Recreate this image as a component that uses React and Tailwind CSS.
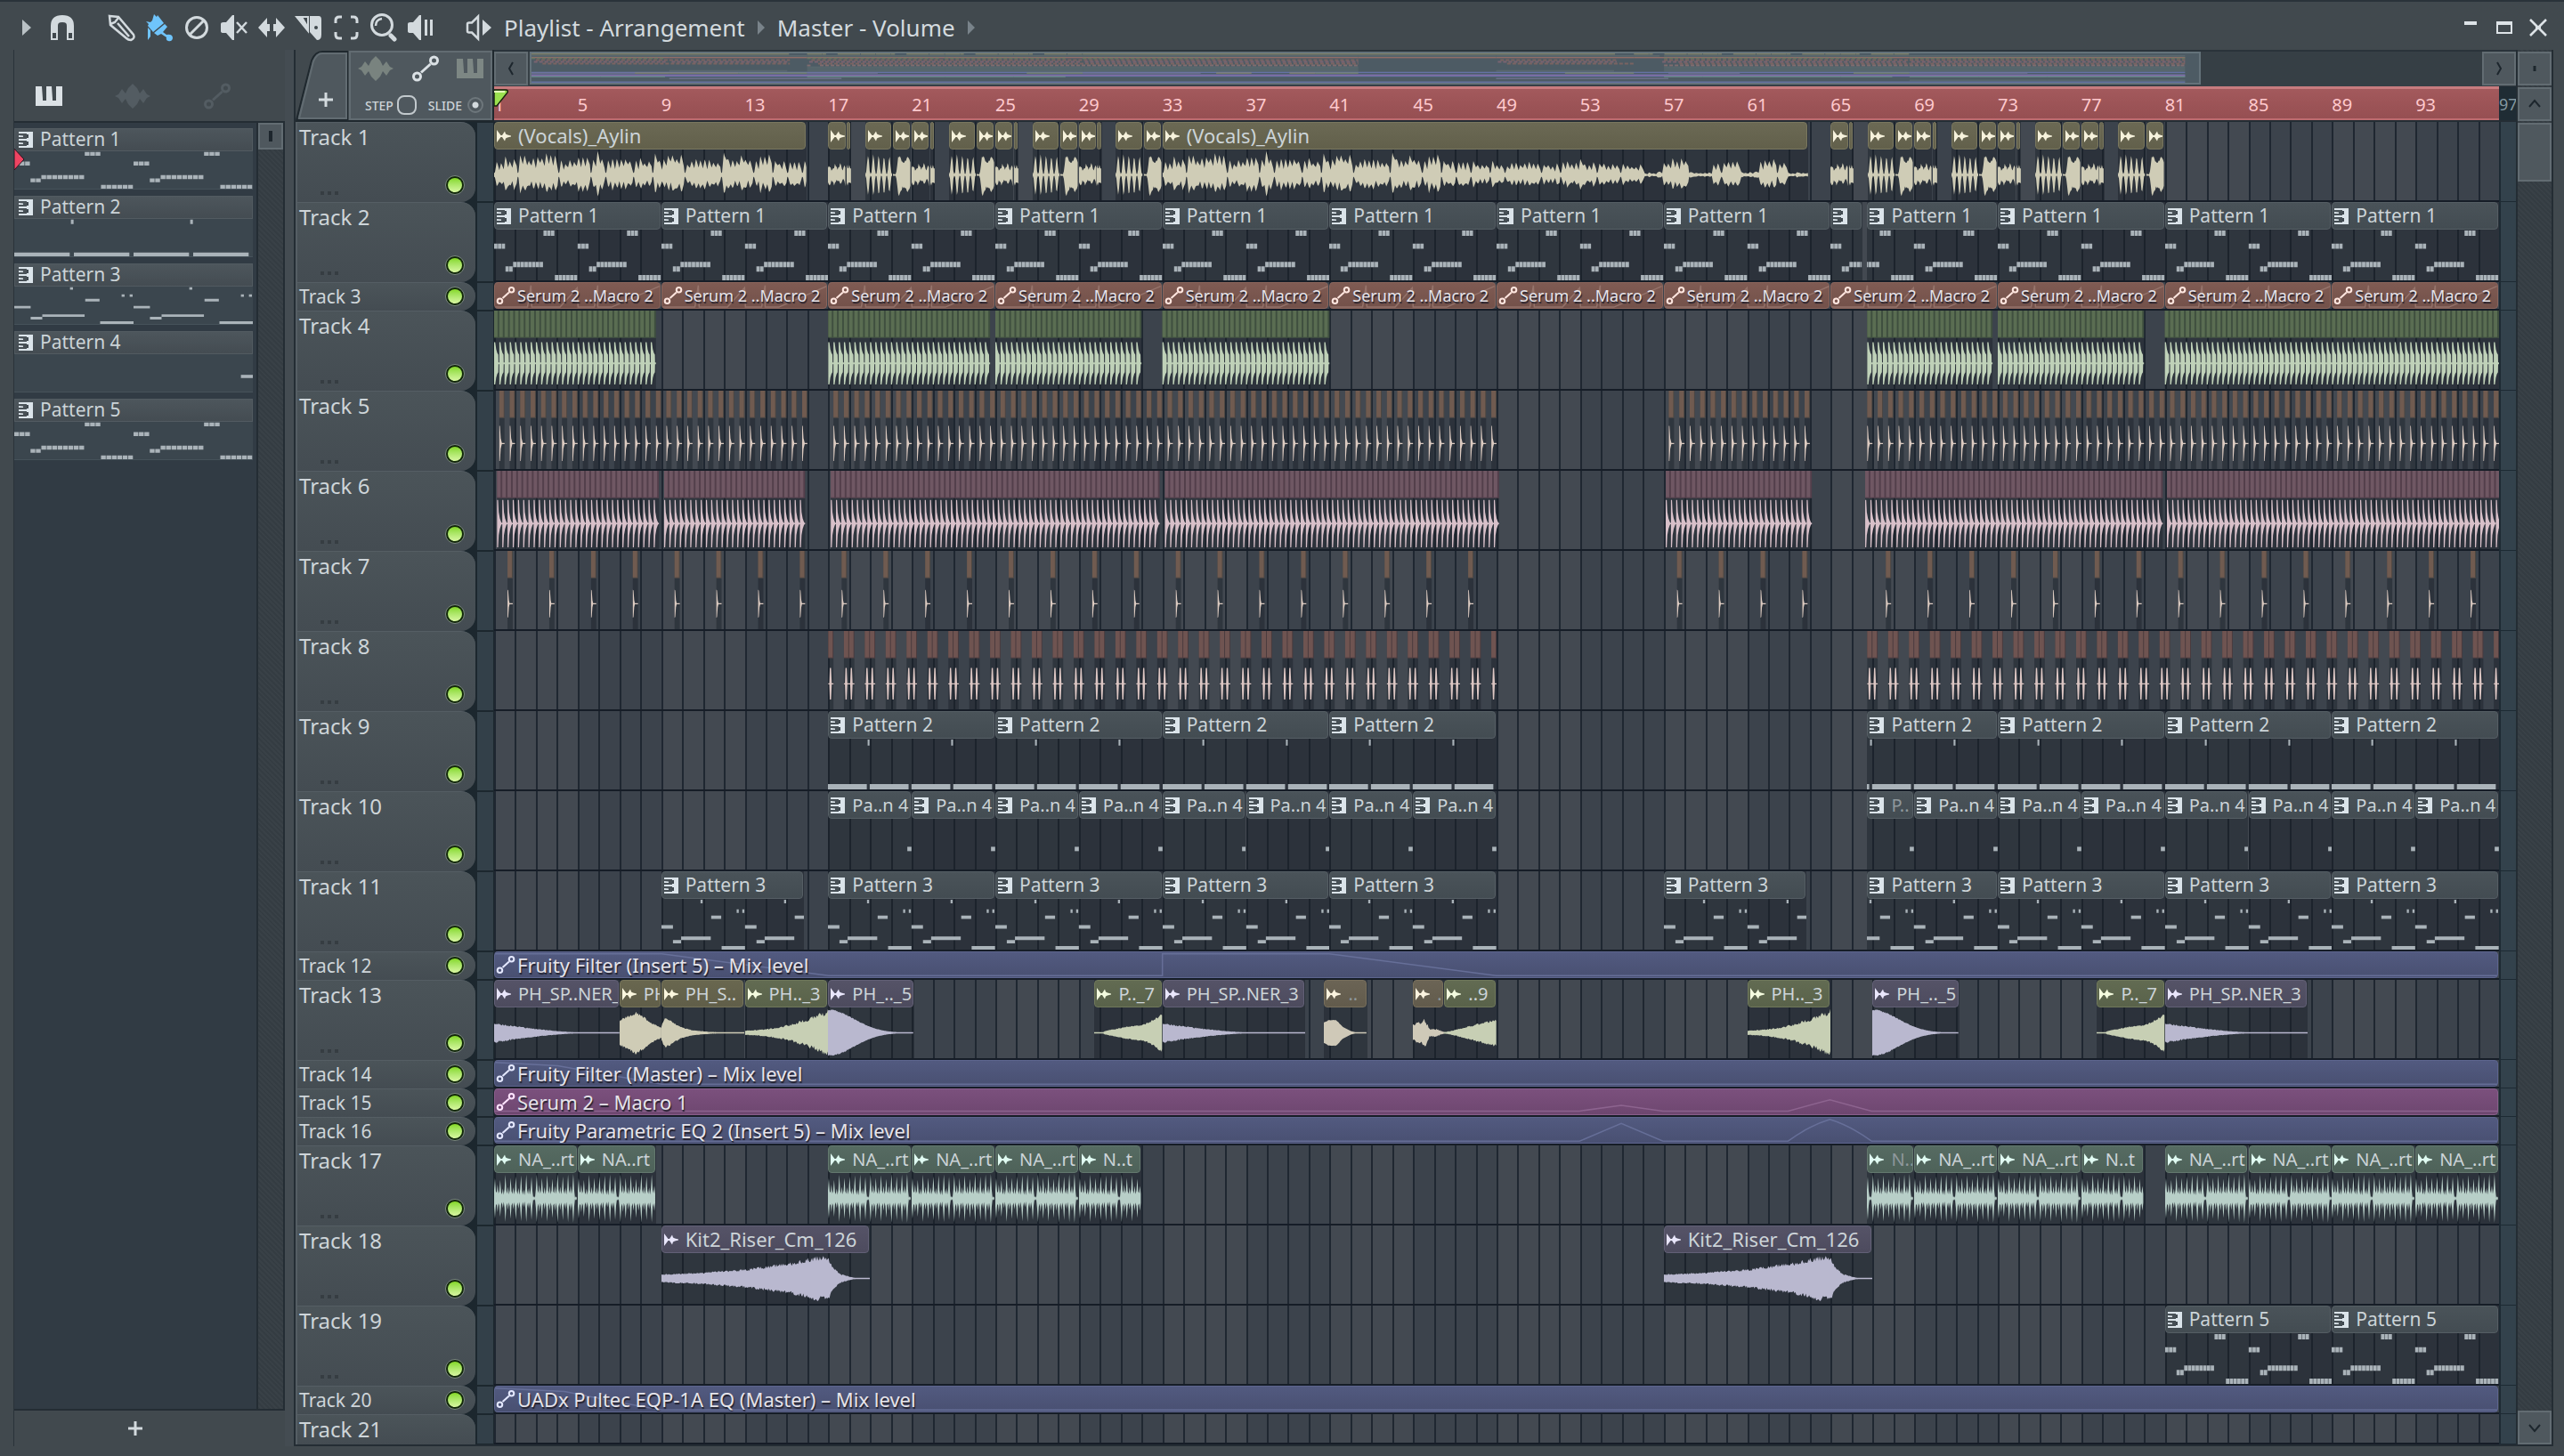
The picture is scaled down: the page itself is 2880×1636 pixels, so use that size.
import { useState } from 'react';
import clsx from 'clsx';

const BARS = 96;
const UNIT = 24; // svg units per bar
const BODY = 58; // svg units for the clip body height

const random = (seed) => {
  let s = seed * 7919 + 13;
  return () => {
    s = (s * 16807) % 2147483647;
    return s / 2147483647;
  };
};

const percent = (bars) => `${(bars / BARS) * 100}%`;

/* Waveforms */

// envelope from a list of [bar, amplitude] points
const envelope = (points) => (t) => {
  const next = points.findIndex(([bar]) => bar >= t);
  if (next === -1) return points[points.length - 1][1];
  if (next === 0) return points[0][1];
  const [x0, y0] = points[next - 1];
  const [x1, y1] = points[next];
  return y0 + ((y1 - y0) * (t - x0)) / (x1 - x0);
};

const wavePath = (length, env, rough, seed) => {
  const rnd = random(seed);
  const width = length * UNIT;
  const top = [];
  const bottom = [];
  for (let x = 0; x <= width; x += 1) {
    const amp = env(x / UNIT);
    top.push(`${x} ${(29 - Math.max(0.7, amp * (1 - rough * rnd()))).toFixed(1)}`);
    bottom.unshift(`${x} ${(29 + Math.max(0.7, amp * (1 - rough * rnd()))).toFixed(1)}`);
  }
  return `M${top.join('L')}L${bottom.join('L')}Z`;
};

const vocalPath = (length, seed) => {
  const rnd = random(seed);
  const width = length * UNIT;
  const top = [];
  const bottom = [];
  let x = 0;
  let phrase = 0;
  let level = 0.8;
  while (x < width) {
    if (phrase <= 0) {
      phrase = 3 + Math.floor(rnd() * 7);
      level = 0.66 + rnd() * 0.34;
      top.push([x, 2], [x + 1, 3]);
      bottom.push([x, 2], [x + 1, 3]);
      x += 2;
    }
    phrase -= 1;
    const bar = x / UNIT;
    let scale = level;
    if (bar > 23) scale *= (bar * 0.42) % 1 > 0.55 ? 0.15 : 0.8;
    else if (bar > 15) scale *= 0.72;
    const peak = 27 * scale * (0.62 + 0.4 * rnd());
    top.push([x + 1, peak], [x + 2, peak * 0.85], [x + 4, peak * (0.35 + 0.35 * rnd())]);
    bottom.push([x + 1, peak * (0.65 + 0.35 * rnd())], [x + 2, peak * 0.8], [x + 4, peak * (0.35 + 0.35 * rnd())]);
    x += 5;
  }
  const up = top.map(([px, a]) => `${Math.min(px, width)} ${(29 - a).toFixed(1)}`);
  const down = bottom.reverse().map(([px, a]) => `${Math.min(px, width)} ${(29 + a).toFixed(1)}`);
  return `M${up.join('L')}L${down.join('L')}Z`;
};

const loopPath = (length, offset) => {
  const rnd = random(5);
  const top = [];
  const bottom = [];
  const start = offset * UNIT;
  for (let x = 0; x < 4 * UNIT; x += 3) {
    const big = x % 6 === 0;
    const a = (big ? 21 + 7 * rnd() : 10 + 6 * rnd()) * (x % 48 === 45 ? 0.2 : 1);
    if (x >= start && x - start <= length * UNIT - 2) {
      const px = x - start;
      top.push(`${px} ${29 - a * 0.4}L${px + 1} ${29 - a}L${px + 2} ${29 - a * 0.35}`);
      bottom.unshift(`${px + 2} ${29 + a * 0.35}L${px + 1} ${29 + a}L${px} ${29 + a * 0.4}`);
    }
  }
  return `M${top.join('L')}L${bottom.join('L')}Z`;
};

const SHAPES = {
  burst: (n) => wavePath(n, (t) => 1 + 24 * Math.pow(Math.abs(Math.sin(t * Math.PI * 3.9)), 3) * (1 - t * 0.1), 0.15, 4),
  fat: (n) => wavePath(n, envelope([[0, 1], [0.15, 1], [0.25, 22], [0.32, 26], [0.45, 16], [0.6, 17], [0.7, 25], [0.85, 13]]), 0.2, 6),
  tail: (n) => wavePath(n, (t) => (t > 0.86 ? 12 : 11 + 3 * Math.sin(t * 24)), 0.45, 9),
  sliver: (n) => wavePath(n, () => 13, 0.5, 3),
  decay: (n) => wavePath(n, (t) => 12 * Math.pow(Math.max(0, 1 - t / 4.8), 1.7), 0.2, 11),
  swell: (n) => wavePath(n, envelope([[0, 15], [0.4, 20], [0.8, 25], [1.1, 20], [1.5, 12], [2, 6]]), 0.15, 12),
  pluck: (n) => wavePath(n, envelope([[0, 8], [0.15, 18], [0.4, 15], [0.9, 7], [1.5, 3], [2.4, 1], [4, 0]]), 0.15, 13),
  rise: (n) => wavePath(n, (t) => 3 + 25 * Math.pow(t / 4, 2), 0.25, 14),
  fall: (n) => wavePath(n, (t) => 27 * Math.exp(-Math.pow(t / 1.75, 2)), 0.06, 15),
  grow: (n) => wavePath(n, envelope([[0, 0], [0.4, 0], [0.5, 2], [1.5, 7], [2.4, 10], [2.8, 15], [3.2, 22]]), 0.15, 16),
  bulb: (n) => wavePath(n, envelope([[0, 12], [0.25, 15], [0.6, 15], [0.9, 7], [1.3, 2], [1.6, 0]]), 0.05, 17),
  rough: (n) => wavePath(n, envelope([[0, 10], [0.6, 17], [0.8, 5], [1.1, 5], [1.5, 1]]), 0.35, 18),
  cone: (n) => wavePath(n, envelope([[0, 1], [0.3, 2], [2.4, 16]]), 0.2, 19),
  riser: (n) => wavePath(n, envelope([[0, 5], [2, 7], [4, 11], [6, 18], [7.4, 26], [8, 27], [8.2, 14], [8.6, 5], [9.2, 1], [10, 0]]), 0.25, 20),
  vocal: (n) => vocalPath(n, 21),
  loop: (n) => loopPath(n, 0),
  loopEnd: (n) => loopPath(n, 1.75),
};

/* Note patterns, four bars long: [start, end, y, height] */

const chords = () => {
  const step = 4 / 22;
  const rows = [19, 19, 19, 45, 45, 40, 40, 40, 40, 40, 40, 40, 40, 4, 4, 4, 55, 55, 55, 55, 55, 55];
  return rows.map((y, i) => [i * step, i * step + step * 0.88, y - 3, 6]);
};

const NOTES = {
  1: chords(),
  2: [[1.9, 1.99, 1, 7], [0, 1.86, 52, 6], [2, 3.86, 52, 6]],
  3: [
    [0, 0.55, 30, 4], [0.55, 0.94, 47, 4], [0.94, 2.36, 43, 4], [2.38, 2.86, 19, 4], [2.88, 4, 54, 4],
    [1.87, 1.97, 1, 4], [3.6, 3.7, 12, 4], [3.87, 3.97, 12, 4],
  ],
  4: [[3.8, 4, 32, 5]],
  5: chords(),
};

const Notes = ({ pattern, start = 0, length, className }) => {
  const first = Math.floor(start / 4) * 4;
  const d = [];
  for (let base = first; base < start + length; base += 4) {
    NOTES[pattern].forEach(([a, b, y, h]) => {
      const x0 = Math.max(base + a - start, 0) * UNIT;
      const x1 = Math.min(base + b - start, length) * UNIT;
      if (x1 > x0) d.push(`M${x0.toFixed(2)} ${y}H${x1.toFixed(2)}v${h}H${x0.toFixed(2)}Z`);
    });
  }
  return (
    <svg className={className} viewBox={`0 0 ${length * UNIT} ${BODY}`} preserveAspectRatio="none" aria-hidden="true">
      <path d={d.join('')} fill="#aab3b9" />
    </svg>
  );
};

/* Track data, positions in bars from the start of the song */

const pattern = (n, start, end, label = `Pattern ${n}`) => ({ kind: 'pattern', n, start, end, label });
const audio = (tone, shape, start, end, label = '') => ({ kind: 'audio', tone, shape, start, end, label });
const auto = (tone, start, end, label, line) => ({ kind: 'auto', tone, start, end, label, line });

const chop = (start) => [
  audio('olive', 'burst', start, start + 1.3),
  audio('olive', 'fat', start + 1.34, start + 2.2),
];
const chopEnd = (start) => [
  audio('olive', 'tail', start, start + 0.86),
  audio('olive', 'sliver', start + 0.88, start + 1.1),
];

const every = (from, to, step, make) => {
  const out = [];
  for (let bar = from; bar < to; bar += step) out.push(make(bar));
  return out;
};

const FULL = 96;
const serumLine = 'M0 30H38L42 3L43 30H76L96 6L97 30H116L120 3V30H136L192 4';
const loopClips = (starts, last) => starts.map((s) => audio('teal', 'loop', s, s + 4, 'NA_..rt')).concat(last);

const TRACKS = [
  {
    clips: [
      audio('olive', 'vocal', 0, 14.95, '(Vocals)_Aylin'),
      ...chopEnd(16),
      ...chop(17.77), ...chopEnd(20),
      ...chop(21.77), ...chopEnd(24),
      ...chop(25.77), ...chopEnd(28),
      ...chop(29.77),
      audio('olive', 'vocal', 32, 62.9, '(Vocals)_Aylin'),
      ...chopEnd(64),
      ...chop(65.77), ...chopEnd(68),
      ...chop(69.77), ...chopEnd(72),
      ...chop(73.77), ...chopEnd(76),
      ...chop(77.77),
    ],
  },
  {
    clips: [
      ...every(0, 64, 8, (b) => pattern(1, b, b + 8)),
      pattern(1, 64, 65.5, ''),
      pattern(1, 65.75, 72),
      ...every(72, 96, 8, (b) => pattern(1, b, b + 8)),
    ],
  },
  { short: true, clips: every(0, 96, 8, (b) => auto('brown', b, b + 8, 'Serum 2 ..Macro 2', serumLine)) },
  { hits: { tone: 'leaf', step: 0.25, shape: 'kick', dense: true, ranges: [[0, 7.7], [16, 23.7], [24, 31], [32, 40], [65.75, 71.7], [72, 79], [80, 96]] } },
  { hits: { tone: 'tan', step: 0.5, shape: 'clap', ranges: [[0.25, 15], [16.25, 48], [56.25, 63], [65.75, 96]] } },
  { hits: { tone: 'rose', step: 0.25, shape: 'hat', dense: true, ranges: [[0.14, 7.8], [8.14, 14.85], [16.12, 31.85], [32.12, 48], [56.1, 63], [65.65, 79.85], [80.1, 96]] } },
  { hits: { tone: 'tan', step: 2, shape: 'snap', ranges: [[0.64, 15], [16.64, 48], [56.64, 64], [66.64, 96]] } },
  { hits: { tone: 'rust', step: 1, shape: 'shake', pair: true, ranges: [[16, 16.2], [16.75, 47.7], [47.75, 48], [65.75, 95.7], [95.75, 96]] } },
  { clips: [...every(16, 48, 8, (b) => pattern(2, b, b + 8)), pattern(2, 65.75, 72), ...every(72, 96, 8, (b) => pattern(2, b, b + 8))] },
  {
    clips: [
      ...every(16, 48, 4, (b) => pattern(4, b, b + 4, 'Pa..n 4')),
      { ...pattern(4, 65.75, 68, 'P..'), faded: true },
      ...every(68, 96, 4, (b) => pattern(4, b, b + 4, 'Pa..n 4')),
    ],
  },
  {
    clips: [
      pattern(3, 8, 14.85),
      ...every(16, 48, 8, (b) => pattern(3, b, b + 8)),
      pattern(3, 56, 62.85),
      pattern(3, 65.75, 72),
      ...every(72, 96, 8, (b) => pattern(3, b, b + 8)),
    ],
  },
  { short: true, clips: [auto('blue', 0, FULL, 'Fruity Filter (Insert 5) – Mix level', 'M0 2H192L384 29H768V2H960L1152 29H2304')] },
  {
    clips: [
      audio('purple', 'decay', 0, 6, 'PH_SP..NER_'),
      audio('khaki', 'swell', 6, 8, 'PH'),
      audio('khaki', 'pluck', 8, 12, 'PH_S..'),
      audio('green', 'rise', 12, 16, 'PH.._3'),
      audio('purple', 'fall', 16, 20.1, 'PH_.._5'),
      audio('green', 'grow', 28.75, 32, 'P.._7'),
      audio('purple', 'decay', 32, 38.85, 'PH_SP..NER_3'),
      { ...audio('sand', 'bulb', 39.75, 41.8, '..'), faded: true },
      { ...audio('sand', 'rough', 44, 45.5, '.'), faded: true },
      audio('green', 'cone', 45.5, 48, '..9'),
      audio('green', 'rise', 60, 64, 'PH.._3'),
      audio('purple', 'fall', 66, 70.15, 'PH_.._5'),
      audio('green', 'grow', 76.75, 80, 'P.._7'),
      audio('purple', 'decay', 80, 86.85, 'PH_SP..NER_3'),
    ],
  },
  { short: true, clips: [auto('blue', 0, FULL, 'Fruity Filter (Master) – Mix level', 'M0 2L72 6L144 20L192 29H2304')] },
  { short: true, clips: [auto('plum', 0, FULL, 'Serum 2 – Macro 1', 'M0 27H1248L1296 20L1344 27H1488L1536 13L1584 27H2304')] },
  { short: true, clips: [auto('blue', 0, FULL, 'Fruity Parametric EQ 2 (Insert 5) – Mix level', 'M0 29H1248L1296 7L1344 29H1488Q1512 10 1536 2Q1560 10 1584 29H2304')] },
  {
    clips: [
      ...loopClips([0], [audio('teal', 'loop', 4, 7.75, 'NA..rt')]),
      ...loopClips([16, 20, 24], [audio('teal', 'loop', 28, 31, 'N..t')]),
      { ...audio('teal', 'loopEnd', 65.75, 68, 'N..'), faded: true },
      ...loopClips([68, 72], [audio('teal', 'loop', 76, 79, 'N..t')]),
      ...loopClips([80, 84, 88, 92], []),
    ],
  },
  { clips: [audio('purple', 'riser', 8, 18, 'Kit2_Riser_Cm_126'), audio('purple', 'riser', 56, 66, 'Kit2_Riser_Cm_126')] },
  { clips: [pattern(5, 80, 88), pattern(5, 88, 96)] },
  { short: true, clips: [auto('blue', 0, FULL, 'UADx Pultec EQP-1A EQ (Master) – Mix level', 'M0 2L80 6L144 20L192 29H2304')] },
  { last: true, clips: [] },
];

const TONES = {
  olive: { head: 'bg-linear-to-b from-[#6b6954] to-[#62604b] border-[#79775f]', wave: '#cfccb6', ink: '#f6f2dc', map: '#8d8c6c' },
  khaki: { head: 'bg-linear-to-b from-[#69674f] to-[#605e49] border-[#76745a]', wave: '#cfccb6', ink: '#fbf7df', map: '#8d8c6c' },
  sand: { head: 'bg-linear-to-b from-[#6b6455] to-[#625b4c] border-[#786f5c]', wave: '#cfc9b8', ink: '#fbf3df', map: '#8d8c6c' },
  green: { head: 'bg-linear-to-b from-[#626b52] to-[#59624a] border-[#6f785b]', wave: '#c7cfb4', ink: '#f4fbdf', map: '#7f8d6c' },
  purple: { head: 'bg-linear-to-b from-[#555367] to-[#4d4b5e] border-[#626076]', wave: '#b9b8cf', ink: '#e9e6fb', map: '#77779a' },
  teal: { head: 'bg-linear-to-b from-[#566b62] to-[#4e6259] border-[#63786e]', wave: '#b8cfc8', ink: '#e0fbf2', map: '#6f9087' },
  brown: { head: 'bg-linear-to-b from-[#7f5b53] to-[#73514a] border-[#8a655c]', line: '#9b7a72', ink: '#ffe6df', map: '#a3736a' },
  blue: { head: 'bg-linear-to-b from-[#525a80] to-[#495072] border-[#5d658e]', line: '#6d76a0', ink: '#e4e8ff', map: '#6b79b5' },
  plum: { head: 'bg-linear-to-b from-[#7b507d] to-[#6e4770] border-[#895e8b]', line: '#946a96', ink: '#ffe4ff', map: '#9a64a0' },
  leaf: { strip: '#5a6d52', gap: '#3f4f3f', wave: '#bfd1b8', map: '#6d8463' },
  tan: { strip: '#705b50', gap: '#4d4743', wave: '#dccbc1', map: '#9a6a60' },
  rose: { strip: '#6f5763', gap: '#533f4b', wave: '#d8c0c9', map: '#996a7c' },
  rust: { strip: '#6f5451', gap: '#4a3b3e', wave: '#dcc6c3', map: '#a37a78' },
};

/* Small drawings */

const PatternIcon = () => (
  <svg className="h-[18px] w-4 shrink-0" viewBox="0 0 16 18" fill="#dbe4ea" aria-hidden="true">
    <path d="M9 0h7v18H9zM0 0h9v2H0zM0 8h9v2H0zM0 16h9v2H0zM0 4l5 .6V6H0zM0 12l5 .6V14H0z" />
    <path d="M9 3h2v4H9zM9 11h2v4H9z" fill="#3f484f" />
  </svg>
);

const AudioIcon = ({ color }) => (
  <svg className="h-4 w-4 shrink-0" viewBox="0 0 16 16" fill={color} aria-hidden="true">
    <path d="M0 1L4.500 7H6L9 2.500L10 5.500L12 6.500L16 7.600V8.400L12 9.500L10 10.500L9 13.500L6 9H4.500L0 15Z" />
  </svg>
);

const AutoIcon = ({ className, color }) => (
  <svg className={className} viewBox="0 0 32 32" fill="none" stroke={color} strokeWidth="3" aria-hidden="true">
    <circle cx="6.500" cy="25" r="4" />
    <circle cx="25.500" cy="7" r="4" />
    <path d="M11 20.500L21.500 11" />
  </svg>
);

const WaveIcon = ({ className, color }) => (
  <svg className={className} viewBox="0 0 40 28" fill={color} aria-hidden="true">
    <path d="M0 14L4 12L8 6L12 11L15 5L20 0L25 5L28 11L32 6L36 12L40 14L36 16L32 22L28 17L25 23L20 28L15 23L12 17L8 22L4 16Z" />
  </svg>
);

const PianoIcon = ({ className, color, keys }) => (
  <svg className={className} viewBox="0 0 30 22" aria-hidden="true">
    <path d="M0 0H30V22H0Z" fill={color} />
    <path d="M7 0L8 14V16H12V0ZM18 0L19 14V16H23V0Z" fill={keys} />
  </svg>
);

const TOOL = '#d3dade';

const ToolIcon = ({ children, fill = TOOL }) => (
  <svg className="size-8" viewBox="0 0 32 32" fill={fill} aria-hidden="true">{children}</svg>
);

const TOOLS = [
  {
    name: 'Draw',
    icon: (
      <ToolIcon fill="none">
        <path d="M2 3L12 4L29 24Q31 28 26 30Q23 30 21 28L3 13Z" stroke={TOOL} strokeWidth="2.500" />
        <path d="M12 5L8 10L3 12M11 11L24 26" stroke={TOOL} strokeWidth="2.500" />
      </ToolIcon>
    ),
  },
  {
    name: 'Paint',
    icon: (
      <ToolIcon fill="#6fc4fb">
        <path d="M10 1L13 4L14 2L21 11L9 21L3 14L4 12L1 9L6 10L8 8Z" />
        <path d="M22 12L25 15L20 21L24 24Q31 23 31 28Q30 32 26 31Q23 30 24 27L18 23L14 25L10 22Z" />
        <path d="M3 16L6 19V26L3 30Z" />
      </ToolIcon>
    ),
  },
  {
    name: 'Delete',
    icon: (
      <ToolIcon fill="none">
        <circle cx="16" cy="16" r="11.500" stroke={TOOL} strokeWidth="3" />
        <path d="M8 24L24 8" stroke={TOOL} strokeWidth="3" />
      </ToolIcon>
    ),
  },
  {
    name: 'Mute',
    icon: (
      <ToolIcon>
        <path d="M1 12Q1 10 4 10H7L14 2H16V30H14L7 22H4Q1 22 1 20Z" />
        <path d="M19 10L30 22M30 10L19 22" stroke={TOOL} strokeWidth="2.500" />
      </ToolIcon>
    ),
  },
  { name: 'Slip', icon: <ToolIcon><path d="M1 16L11 5V12H14V20H11V27ZM31 16L21 5V12H18V20H21V27Z" /></ToolIcon> },
  {
    name: 'Slice',
    icon: (
      <ToolIcon>
        <path d="M2 4H15V20Z" fill="none" stroke={TOOL} strokeWidth="2" />
        <path d="M3 4L9 4L15 14V20Z" />
        <path d="M17 3H27Q30 3 30 7V24Q30 30 25 30L17 21Z" />
        <circle cx="24" cy="16" r="2" fill="#40484d" />
      </ToolIcon>
    ),
  },
  {
    name: 'Select',
    icon: (
      <ToolIcon fill="none">
        <path d="M4 11V8Q4 4 8 4H11M21 4H24Q28 4 28 8V11M28 21V24Q28 28 24 28H21M11 28H8Q4 28 4 24V21" stroke={TOOL} strokeWidth="3" />
      </ToolIcon>
    ),
  },
  {
    name: 'Zoom',
    icon: (
      <ToolIcon fill="none">
        <circle cx="14" cy="13" r="11.500" stroke={TOOL} strokeWidth="3" />
        <path d="M7 14Q7 7 14 6" stroke={TOOL} strokeWidth="2.500" />
        <path d="M24 25L28 29" stroke={TOOL} strokeWidth="5" strokeLinecap="round" />
      </ToolIcon>
    ),
  },
  {
    name: 'Playback',
    icon: (
      <ToolIcon>
        <path d="M1 12Q1 10 4 10H7L14 2H16V30H14L7 22H4Q1 22 1 20Z" />
        <path d="M20 7H23V25H20ZM26 7H29V25H26Z" />
      </ToolIcon>
    ),
  },
];

const Toolbar = () => {
  const [tool, setTool] = useState('Paint');

  return (
    <header className="flex h-[54px] items-center pt-1 pl-4 text-[26px] text-[#d3dade]">
      <button type="button" aria-label="Menu" className="flex h-10 w-7 items-center justify-center">
        <svg className="h-[18px] w-2.5" viewBox="0 0 10 18" fill="#b9c1c5"><path d="M0 0L10 9L0 18Z" /></svg>
      </button>
      <button type="button" aria-label="Snap" className="flex h-10 w-[52px] items-center justify-center">
        <svg className="h-7 w-[26px]" viewBox="0 0 26 28">
          <path d="M4 28V12Q4 4 13 4T22 12V28" fill="none" stroke={TOOL} strokeWidth="8" />
          <path d="M2 20h4v6H2zM20 20h4v6h-4z" fill="#40484d" />
        </svg>
      </button>
      <div className="ml-5 flex">
        {TOOLS.map(({ name, icon }) => (
          <button
            key={name}
            type="button"
            aria-label={name}
            aria-pressed={tool === name}
            onClick={() => setTool(name)}
            className="flex h-10 w-[42px] items-center justify-center"
          >
            {icon}
          </button>
        ))}
      </div>
      <button type="button" aria-label="Playlist menu" className="ml-6 flex h-10 w-10 items-center justify-center">
        <ToolIcon>
          <path d="M3 12Q3 10.500 5 10.500H8L15 3.500V28.500L8 21.500H5Q3 21.500 3 20Z" fill="none" stroke={TOOL} strokeWidth="2.500" />
          <path d="M20 7L30 16L20 25Z" />
        </ToolIcon>
      </button>
      <h1 className="ml-2">Playlist - Arrangement</h1>
      <svg className="mx-3.5 h-4 w-2" viewBox="0 0 8 16" fill="#79838a"><path d="M0 0L8 8L0 16Z" /></svg>
      <span>Master - Volume</span>
      <svg className="mx-3.5 h-4 w-2" viewBox="0 0 8 16" fill="#79838a"><path d="M0 0L8 8L0 16Z" /></svg>
      <div className="mr-2.5 ml-auto flex">
        <button type="button" aria-label="Minimise" className="flex size-[38px] items-center justify-center">
          <svg className="size-5" viewBox="0 0 20 20" fill="#dde3e7"><path d="M3 3H17V7H3Z" /></svg>
        </button>
        <button type="button" aria-label="Maximise" className="flex size-[38px] items-center justify-center">
          <svg className="size-5" viewBox="0 0 20 20" fill="#dde3e7"><path d="M1 3H19V17H1ZM3 7V15H17V7Z" fillRule="evenodd" /></svg>
        </button>
        <button type="button" aria-label="Close" className="flex size-[38px] items-center justify-center">
          <svg className="size-5" viewBox="0 0 20 20" stroke="#dde3e7" strokeWidth="2.500"><path d="M1 1L19 19M19 1L1 19" /><path d="M7 10H13" strokeWidth="4" /></svg>
        </button>
      </div>
    </header>
  );
};

const HATCH = 'bg-[repeating-linear-gradient(45deg,#343c42_0_2px,#394147_2px_4px)]';

const ScrollButton = ({ label, className, children }) => (
  <button
    type="button"
    aria-label={label}
    className={clsx('flex h-[38px] w-[38px] shrink-0 items-center justify-center border-2 border-[#626c72] bg-[#4f585e]', className)}
  >
    <svg className="h-4 w-4" viewBox="0 0 16 16" fill="none" stroke="#1d262d" strokeWidth="2">{children}</svg>
  </button>
);

const Picker = () => {
  const [selected, setSelected] = useState(1);

  return (
    <aside className="flex w-[305px] shrink-0 flex-col border-l border-[#2a333a]">
      <div className="flex h-20 items-center pt-6">
        <button type="button" aria-label="Patterns" className="ml-6"><PianoIcon className="h-[22px] w-[30px]" color="#dbe1e5" keys="#40484d" /></button>
        <button type="button" aria-label="Audio clips" className="ml-[59px]"><WaveIcon className="h-7 w-10" color="#535c62" /></button>
        <button type="button" aria-label="Automation clips" className="ml-[59px]"><AutoIcon className="size-8" color="#535c62" /></button>
      </div>
      <div className="flex grow border-t-2 border-b-2 border-[#242d34]">
        <ul className="flex grow flex-col gap-[7px] bg-[#313b44] pt-1.5 pr-1">
          {[1, 2, 3, 4, 5].map((n) => (
            <li key={n} className="relative">
              <button type="button" onClick={() => setSelected(n)} className="block w-full text-left">
                <span className="flex h-[26px] items-center gap-2 border border-[#525b61] bg-linear-to-b from-[#4d565c] to-[#444c52] pl-1 text-[21px] text-[#ccd4d8]">
                  <PatternIcon />
                  Pattern {n}
                </span>
                <Notes pattern={n} length={n === 4 ? 4 : 8} className="block h-[43px] w-full border-b border-[#46525a] bg-[#3b464e]" />
              </button>
              {selected === n && (
                <svg className="absolute top-[23px] left-0 h-6 w-3" viewBox="0 0 12 24"><path d="M0 0L11 12L0 24Z" fill="#f04462" stroke="#2a1520" /></svg>
              )}
            </li>
          ))}
        </ul>
        <div className={clsx('w-8 border-x-2 border-[#242d34]', HATCH)}>
          <button type="button" aria-label="Scroll patterns" className="flex h-[30px] w-full items-center justify-center border-2 border-[#626c72] bg-[#4f585e]">
            <span className="h-3 w-1 bg-[#1d262d]" />
          </button>
        </div>
      </div>
      <div className="flex h-10 items-center justify-center">
        <button type="button" aria-label="Add pattern" className="mr-8">
          <svg className="size-4" viewBox="0 0 16 16" fill="#d3dade"><path d="M6.500 0h3v6.500H16v3H9.500V16h-3V9.500H0v-3h6.500z" /></svg>
        </button>
      </div>
    </aside>
  );
};

/* Clips */

const labelSize = (length) => (length >= 10 ? 'text-[22px]' : length > 6.9 ? 'text-[21px]' : 'text-[20px]');

const Clip = ({ clip }) => {
  const { kind, start, end, label, faded } = clip;
  const length = end - start;
  const style = { left: percent(start), width: percent(length) };
  const tone = TONES[clip.tone];

  if (kind === 'auto') {
    return (
      <div className="absolute inset-y-0 pr-px" style={style}>
        <div className={clsx('relative flex h-full items-center overflow-hidden rounded-sm border whitespace-nowrap', tone.head)}>
          <svg className="absolute inset-0 h-full w-full" viewBox={`0 0 ${length * UNIT} 31`} preserveAspectRatio="none">
            <path d={clip.line} fill="none" stroke={tone.line} strokeWidth="1.500" strokeOpacity="0.8" vectorEffect="non-scaling-stroke" />
          </svg>
          <AutoIcon className="relative ml-px size-[22px] shrink-0" color={tone.ink} />
          <span className={clsx('relative ml-0.5 text-[#e6e4ea] [text-shadow:1px_2px_1px_#22202c]', length > 8 ? 'text-[22px]' : 'text-[18px]')}>{label}</span>
        </div>
      </div>
    );
  }

  const isPattern = kind === 'pattern';
  const head = isPattern ? 'bg-linear-to-b from-[#4a5359] to-[#434c52] border-[#555e64]' : tone.head;
  const size = isPattern && length > 6 ? 'text-[21px]' : isPattern || length > 6.9 ? labelSize(length) : 'text-[20px]';

  return (
    <div className="absolute inset-y-0 flex flex-col bg-[#182028]/45" style={style}>
      <div className={clsx('mr-px flex h-[31px] shrink-0 items-center gap-2 overflow-hidden rounded-sm border pl-0.5 whitespace-nowrap', head)}>
        {isPattern && <PatternIcon />}
        {!isPattern && length > 0.5 && <AudioIcon color={tone.ink} />}
        {label && <span className={clsx(size, tone?.head && length < 10 && 'text-[20px]', faded ? 'text-[#8f989c]' : 'text-[#ccd4d8]')}>{label}</span>}
      </div>
      {isPattern ? (
        <Notes pattern={clip.n} start={start} length={length} className="block w-full grow" />
      ) : (
        <svg className="block w-full grow" viewBox={`0 0 ${length * UNIT} ${BODY}`} preserveAspectRatio="none">
          <path d={SHAPES[clip.shape](length)} fill={tone.wave} />
        </svg>
      )}
    </div>
  );
};

// one shot samples: half outline as [x, amplitude]
const HIT_OUTLINES = {
  kick: [[0, 24], [1.3, 24], [2.4, 16], [3.6, 12], [4.8, 10], [5, 1], [6, 1]],
  clap: [[0, 20], [0.7, 20], [1.6, 6], [2.6, 2], [3, 0.7], [6, 0.7]],
  hat: [[0, 27], [1.2, 27], [1.9, 13], [3.2, 6], [4.6, 2], [5.4, 0.8], [6, 0.8]],
  snap: [[0, 16], [0.8, 15], [1.6, 4], [2.4, 0.7], [6, 0.7]],
  shake: [[0, 0.7], [1.2, 0.7], [1.8, 18], [3.2, 18], [4, 0.7], [6, 0.7]],
};

const Hits = ({ tone, step, shape, dense, pair, ranges }) => {
  const colors = TONES[tone];
  const outline = HIT_OUTLINES[shape];
  const hits = [];
  ranges.forEach(([from, to]) => {
    for (let bar = from; bar < to - 0.05; bar += step) {
      hits.push(bar);
      if (pair && to - from > 1) hits.push(bar + 0.25);
    }
  });
  const block = (list, y, h, w) => list.map((bar) => `M${(bar * UNIT).toFixed(1)} ${y}h${w}v${h}h-${w}Z`).join('');
  const waves = hits.map((bar) => {
    const x = bar * UNIT;
    const up = outline.map(([dx, a]) => `${(x + dx).toFixed(1)} ${60 - a}`);
    const down = [...outline].reverse().map(([dx, a]) => `${(x + dx).toFixed(1)} ${60 + a}`);
    return `M${up.join('L')}L${down.join('L')}Z`;
  });

  return (
    <svg className="absolute inset-0 h-full w-full" viewBox="0 0 2304 89" preserveAspectRatio="none">
      <path d={block(hits, 31, 58, 6)} fill="#182028" fillOpacity="0.45" />
      <path d={block(hits, 0, 31, 6)} fill={colors.gap} />
      <path d={block(hits, 0, 30, dense ? 4 : 5)} fill={colors.strip} />
      <path d={waves.join('')} fill={colors.wave} />
    </svg>
  );
};

const rowHeight = (track) => (track.short ? 'h-8' : track.last ? 'h-[34px]' : 'h-[90px]');

const TrackHeader = ({ track, number }) => {
  const [on, setOn] = useState(true);

  return (
    <div className={clsx('flex w-[223px] shrink-0 bg-[#1c272e]', rowHeight(track))}>
      <div
        className={clsx(
          'flex w-[202px] justify-between overflow-hidden border-t border-l-2 border-[#555e64] bg-linear-to-b from-[#4b5459] to-[#444c52] pr-3 pl-0.5',
          track.last ? 'rounded-tr-2xl' : 'rounded-r-2xl',
        )}
      >
        <div className="flex flex-col justify-between">
          <span className={clsx('text-[#ced5d9]', track.short ? 'text-[21px] leading-[30px]' : 'text-[24px] leading-8')}>Track {number}</span>
          {!track.short && !track.last && (
            <span className="mb-2 ml-6 flex gap-1" aria-hidden="true">
              <i className="size-1 bg-[#363d42]" />
              <i className="size-1 bg-[#363d42]" />
              <i className="size-1 bg-[#363d42]" />
            </span>
          )}
        </div>
        {!track.last && (
          <button
            type="button"
            aria-label={`Mute track ${number}`}
            aria-pressed={on}
            onClick={() => setOn(!on)}
            className={clsx('flex size-[22px] items-center justify-center rounded-full border border-[#7c8782] bg-[#12280a]', track.short ? 'mt-1' : 'mt-[59px]')}
          >
            <span className={clsx('size-4 rounded-full', on ? 'bg-linear-to-b from-[#84d81f] to-[#d8f7a0]' : 'bg-[#3c4a33]')} />
          </button>
        )}
      </div>
      <div className="my-px ml-auto w-[19px] border-r border-[#1c272e] bg-[#334049]" />
    </div>
  );
};

const TrackRow = ({ track, number }) => (
  <div className="flex">
    <TrackHeader track={track} number={number} />
    <div className={clsx('relative grow overflow-hidden border-b-2 border-[#161d27]', rowHeight(track))}>
      {track.hits && <Hits {...track.hits} />}
      {track.clips?.map((clip) => <Clip key={clip.start} clip={clip} />)}
    </div>
    <div className={clsx('w-[19px] shrink-0 border-b border-l-2 border-[#1d2a33] bg-[#33424c]', rowHeight(track))} />
  </div>
);

const BarGrid = () => (
  <div className="absolute inset-y-0 right-[19px] left-[223px] grid grid-cols-[repeat(96,minmax(0,1fr))]">
    {Array.from({ length: BARS }, (_, bar) => (
      <div key={bar} className={clsx('border-l-2 border-[#1f2731]', Math.floor(bar / 4) % 2 ? 'bg-[#3c434c]' : 'bg-[#434951]')} />
    ))}
  </div>
);

const Minimap = () => {
  let y = 0;
  return (
    <div className="grow-[6] basis-0 border-2 border-[#64727a] bg-[#4d5b64]">
      <svg className="block h-full w-full" viewBox="0 0 968 1486" preserveAspectRatio="none" aria-hidden="true">
        {TRACKS.map((track, i) => {
          const top = y;
          y += track.short ? 32 : 90;
          if (track.hits) {
            return track.hits.ranges.map(([from, to]) => (
              <path
                key={`${i}-${from}`}
                d={`M${from * 10} ${top + 40}H${to * 10}`}
                stroke={TONES[track.hits.tone].map}
                strokeWidth="2"
                strokeOpacity="0.6"
                strokeDasharray="4 2"
                vectorEffect="non-scaling-stroke"
              />
            ));
          }
          return track.clips.map((clip) => (
            <rect
              key={`${i}-${clip.start}`}
              x={clip.start * 10}
              y={top}
              width={(clip.end - clip.start) * 10}
              height={clip.kind === 'pattern' ? 80 : 62}
              fill={clip.kind === 'pattern' ? '#5c6b70' : TONES[clip.tone].map}
              fillOpacity="0.8"
            />
          ));
        })}
      </svg>
    </div>
  );
};

const Ruler = () => (
  <div className="flex h-10 border-b-2 border-[#242d34] text-[20px]">
    <div className="relative grid grow grid-cols-[repeat(24,minmax(0,1fr))] items-center border-t-3 border-b-2 border-t-[#c87c7f] border-b-[#bd6c70] bg-linear-to-b from-[#a3595c] to-[#964f52] pt-0.5 text-[#ffc9cd]">
      {Array.from({ length: 24 }, (_, i) => <span key={i}>{i * 4 + 1}</span>)}
      <svg className="absolute top-0 left-0 h-5 w-4" viewBox="0 0 16 20">
        <path d="M0 1H13Q16 1 15 4L3 19H0Z" fill="#9be04f" stroke="#16240c" strokeWidth="1.500" />
        <path d="M0 3H12" stroke="#e4fab8" strokeWidth="2" />
      </svg>
    </div>
    <div className="flex w-[19px] items-center overflow-hidden bg-[#1f2c34] pt-0.5 text-[18px] text-[#84979f]">97</div>
  </div>
);

const PlaylistTop = () => {
  const [step, setStep] = useState(false);

  return (
    <div className="flex h-[81px]">
      <div className="flex w-[223px] shrink-0 border-b-2 border-r-2 border-[#1f282e]">
        <button type="button" aria-label="Add track" className="relative w-[60px]">
          <svg className="absolute inset-0 h-full w-full" viewBox="0 0 60 79">
            <path d="M1 79L18 12Q22 2 30 2H58V78H2" fill="#4f585e" stroke="#1f282e" strokeWidth="2" />
            <path d="M4 77L20 13Q24 4 30 4H57V77Z" fill="none" stroke="#626c72" strokeWidth="2" />
            <path d="M32.500 48h3v6.500H42v3h-6.500V64h-3v-6.500H26v-3h6.500z" fill="#d3dade" />
          </svg>
        </button>
        <div className="mt-px flex grow flex-col justify-between border-2 border-[#626c72] bg-[#4f585e] pt-0.5 pr-2 pb-1 pl-2">
          <div className="flex items-center justify-between">
            <button type="button" aria-label="Focus audio"><WaveIcon className="h-7 w-10" color="#79837f" /></button>
            <button type="button" aria-label="Focus automation"><AutoIcon className="size-8" color="#dbe1e5" /></button>
            <button type="button" aria-label="Focus patterns"><PianoIcon className="h-[22px] w-[30px]" color="#7d8784" keys="#4f585e" /></button>
          </div>
          <div className="flex items-center justify-between pl-2 text-[14px] font-medium text-[#cdd4d8]">
            <label className="flex items-center gap-1">
              STEP
              <input type="checkbox" checked={step} onChange={() => setStep(!step)} className="size-[22px] appearance-none rounded-lg border-2 border-[#c2c9cd] checked:bg-[#c2c9cd]" />
            </label>
            <label className="flex items-center gap-1.5">
              SLIDE
              <input type="radio" defaultChecked className="size-[18px] appearance-none rounded-full border-2 border-[#6d767b] bg-[radial-gradient(circle,#d3dade_3px,transparent_4px)]" />
            </label>
          </div>
        </div>
      </div>
      <div className="flex grow flex-col">
        <div className="flex h-[41px] gap-0.5 border-t-2 border-[#2a333a] bg-[#363f45] pb-0.5">
          <ScrollButton label="Scroll left"><path d="M10 1L6 8L10 15" /></ScrollButton>
          <Minimap />
          <div className="grow basis-0" />
          <ScrollButton label="Scroll right"><path d="M6 1L10 8L6 15" /></ScrollButton>
        </div>
        <Ruler />
      </div>
    </div>
  );
};

const Playlist = () => (
  <main className="flex grow border-x-2 border-[#242d34]">
    <div className="flex grow flex-col">
      <PlaylistTop />
      <div className="relative grow border-b-2 border-[#242d34]">
        <BarGrid />
        <div className="relative text-[20px]">
          {TRACKS.map((track, i) => <TrackRow key={i} track={track} number={i + 1} />)}
        </div>
      </div>
    </div>
    <div className={clsx('flex w-10 shrink-0 flex-col border-b-2 border-l-2 border-[#242d34]', HATCH)}>
      <ScrollButton label="Options" className="mt-0.5"><path d="M8 5V11" strokeWidth="3" /></ScrollButton>
      <ScrollButton label="Scroll up" className="mt-0.5"><path d="M2 11L8 4L14 11" /></ScrollButton>
      <div className="mt-0.5 h-[66px] w-[38px] border-2 border-[#626c72] bg-[#4f585e]" />
      <ScrollButton label="Scroll down" className="mt-auto"><path d="M2 5L8 12L14 5" /></ScrollButton>
    </div>
  </main>
);

const App = () => (
  <div className="flex min-h-screen min-w-[1280px] flex-col border-t-2 border-[#2a333a] bg-[#41494e] font-['Noto_Sans',sans-serif]">
    <Toolbar />
    <div className="flex grow pr-3 pb-3 pl-[15px]">
      <Picker />
      <div className="w-[10px] shrink-0 bg-[#444c52]" />
      <Playlist />
    </div>
  </div>
);

export default App;
